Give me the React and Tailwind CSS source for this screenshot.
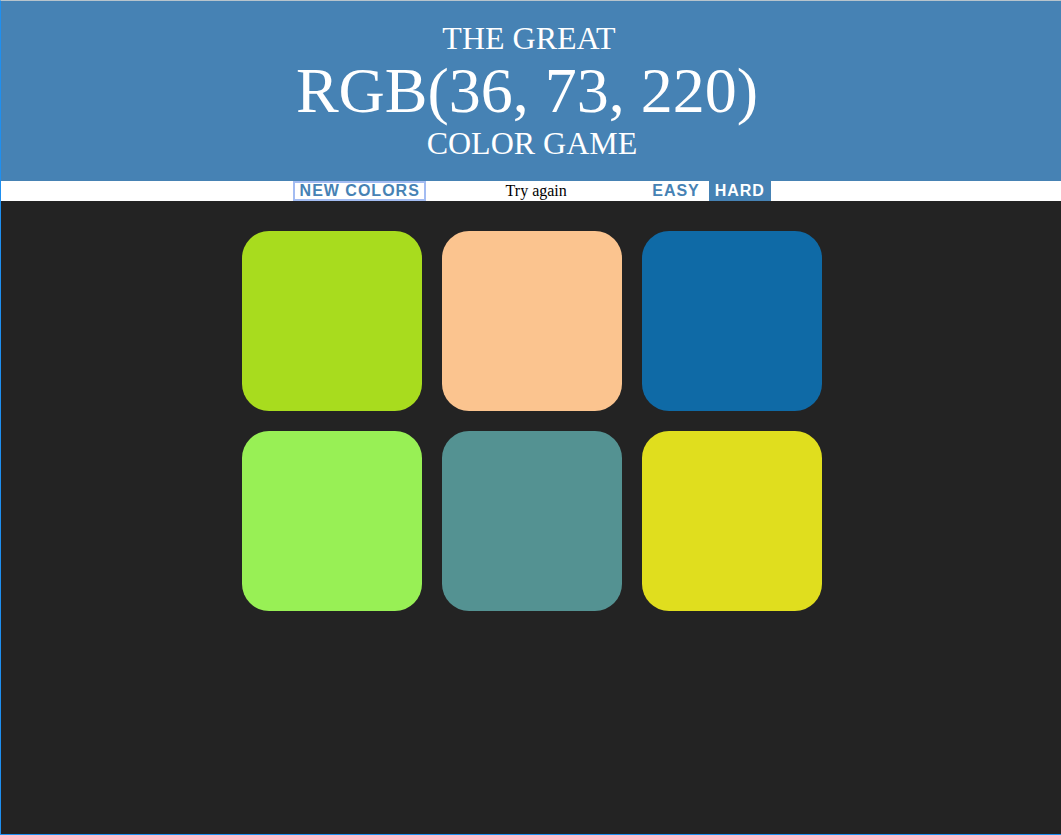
import React from "react";

const colors = ["#a8dc1e", "#fbc48f", "#0f6aa6", "#98f055", "#549292", "#e0de1e"];

export default function App() {
  return (
    <div className="min-h-[835px] h-[835px] bg-[#232323] border-l border-b border-t border-l-[#1e8ff0] border-b-[#1e8ff0] border-t-[#b8c4cc] flex flex-col" style={{ fontFamily: '"Liberation Serif", serif' }}>
      <h1 className="bg-[#4682b4] text-white text-center uppercase font-normal py-[20px] flex flex-col items-center">
        <span className="text-[32px] leading-[35px] -ml-[4px]">THE GREAT</span>
        <span className="text-[64px] leading-[70px] -ml-[8px]">RGB(36, 73, 220)</span>
        <span className="text-[32px] leading-[35px] ml-[2px]">COLOR GAME</span>
      </h1>
      <div className="bg-white h-[20px] flex justify-center items-stretch text-black text-[16px] pl-[2px]">
        <button className="h-full w-[133px] border-2 border-[#a3bcf2] text-[#4682b4] font-bold uppercase tracking-[1px] text-[16px] leading-none text-center" style={{ fontFamily: '"Liberation Sans", Arial, sans-serif' }}>
          New Colors
        </button>
        <span className="w-[212px] ml-[4px] text-center leading-[20px]">Try again</span>
        <button className="h-full ml-[4px] pl-[6px] pr-[6px] text-[#4682b4] font-bold uppercase tracking-[1px] text-[16px] leading-none" style={{ fontFamily: '"Liberation Sans", Arial, sans-serif' }}>
          Easy
        </button>
        <button className="h-full ml-[3px] w-[62px] bg-[#4682b4] text-white font-bold uppercase tracking-[1px] text-[16px] leading-none text-center" style={{ fontFamily: '"Liberation Sans", Arial, sans-serif' }}>
          Hard
        </button>
      </div>
      <div className="w-[580px] mx-auto mt-[30px] grid grid-cols-3 gap-[20px] pl-[2px] box-content">
        {colors.map((c, i) => (
          <div key={i} className="w-[180px] h-[180px] rounded-[27px]" style={{ backgroundColor: c }} />
        ))}
      </div>
    </div>
  );
}
